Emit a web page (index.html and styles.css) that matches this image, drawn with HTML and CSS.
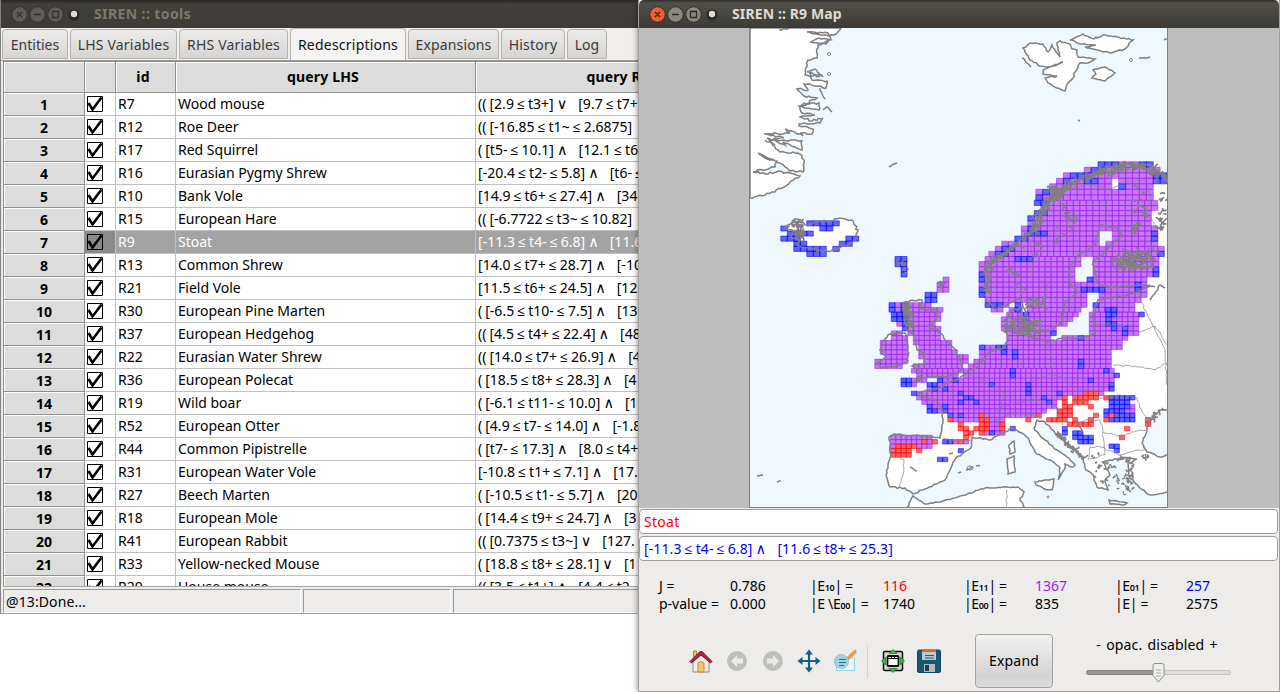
FILE: index.html
```html
<!DOCTYPE html>
<html lang="en">
<head>
<meta charset="utf-8">
<title>SIREN</title>
<link rel="stylesheet" href="styles.css">
</head>
<body>
<section class="window tools">
  <header class="titlebar inactive">
    <svg class="controls" width="76" height="28" viewBox="0 0 76 28"><g fill="#5e5c56" stroke="#34332f"><circle cx="12.500" cy="14.500" r="7.800"/><circle cx="30.500" cy="14.500" r="7.800"/><circle cx="48.500" cy="14.500" r="7.800"/></g><path d="M10 12l5 5m0-5l-5 5M27 14.500h7M45.500 11.500h6v6h-6z" fill="none" stroke="#33322e" stroke-width="1.300"/><circle cx="67" cy="15" r="5.500" fill="#292825"/><circle cx="67" cy="14" r="3.200" fill="#dedbd5"/></svg>
    <h1>SIREN :: tools</h1>
  </header>
  <nav class="tabs">
    <span class="tab t1">Entities</span><span class="tab t2">LHS Variables</span><span class="tab t3">RHS Variables</span><span class="tab t4 active">Redescriptions</span><span class="tab t5">Expansions</span><span class="tab t6">History</span><span class="tab t7">Log</span>
  </nav>
  <div class="table">
    <div class="row head"><span></span><span></span><span>id</span><span>query LHS</span><span>query RHS</span></div>
    <div class="body" id="rows"></div>
  </div>
  <footer class="status"><span class="s1">@13:Done...</span><span class="s2"></span><span class="s3"></span></footer>
</section>

<section class="window map">
  <header class="titlebar">
    <svg class="controls" width="76" height="28" viewBox="0 0 76 28"><g stroke="#2e2d29"><circle cx="12.500" cy="14.500" r="7.800" fill="#ea5f35"/><circle cx="30.500" cy="14.500" r="7.800" fill="#8a887f"/><circle cx="48.500" cy="14.500" r="7.800" fill="#8a887f"/></g><path d="M10 12l5 5m0-5l-5 5M27 14.500h7M45.500 11.500h6v6h-6z" fill="none" stroke="#33261f" stroke-width="1.300"/><circle cx="67" cy="15" r="5.500" fill="#292825"/><circle cx="67" cy="14" r="3.200" fill="#dedbd5"/></svg>
    <h1>SIREN :: R9 Map</h1>
  </header>
  <div class="canvas"><svg id="europe" width="419" height="480" viewBox="749 28 419 480"></svg></div>
  <div class="field red">Stoat</div>
  <div class="field blue"><span class="q">[-11.3 ≤ t4- ≤ 6.8] <i>∧</i>   [11.6 ≤ t8+ ≤ 25.3]</span></div>
  <div class="stats">
    <span>J =</span><span>0.786</span><span class="e">|E<b>10</b>| =</span><span class="red">116</span><span class="e">|E<b>11</b>| =</span><span class="purple">1367</span><span class="e">|E<b>01</b>| =</span><span class="blue">257</span>
    <span>p-value =</span><span>0.000</span><span class="e">|E \E<b>00</b>| =</span><span>1740</span><span class="e">|E<b>00</b>| =</span><span>835</span><span class="e">|E| =</span><span>2575</span>
  </div>
  <div class="toolbar">
    <svg class="icon" viewBox="0 0 24 24"><path d="M4.500 2h3v6h-3z" fill="#f4c266" stroke="#b5803c"/><path d="M4 12L12 4l8 8v11H4z" fill="#eee" stroke="#8b8b8b"/><path d="M9 23v-9q3-3 6 0v9z" fill="#f6c667" stroke="#d8871c"/><path d="M1 12.500L11 2.500h2l10 10-1.500 1.500L12 6l-9.500 8z" fill="#b3243d" stroke="#7c1227"/></svg>
    <svg class="icon" viewBox="0 0 24 24"><circle cx="12" cy="12" r="10" fill="#bdbfbc"/><path d="M6 12l6-6v3.500h6v5h-6V18z" fill="#ecebe9"/></svg>
    <svg class="icon" viewBox="0 0 24 24"><circle cx="12" cy="12" r="10" fill="#bdbfbc"/><path d="M18 12l-6-6v3.500H6v5h6V18z" fill="#ecebe9"/></svg>
    <svg class="icon" viewBox="0 0 24 24"><path d="M12 3v18M3 12h18" stroke="#12617f" stroke-width="2.200"/><path d="M12 .5l4 5H8zM12 23.500l4-5H8zM.500 12l5-4v8zM23.500 12l-5-4v8z" fill="#12617f"/></svg>
    <svg class="icon" viewBox="0 0 24 24"><path d="M3.500 9h18v12.500h-18z" fill="#e8f7f9" stroke="#8bdce9"/><path d="M13 9.500l7-7 3-1.500v3l-8 7z" fill="#f0a13e" stroke="#bc8752" stroke-width=".6"/><circle cx="8.500" cy="12.500" r="7" fill="#91cbd6" fill-opacity=".8" stroke="#a7bfc3"/><path d="M6 10.500h7m-7 3h7m-7 3h5" stroke="#147596"/></svg>
    <i class="separator"></i>
    <svg class="icon" viewBox="0 0 24 24"><rect x="2.500" y="2.500" width="19" height="19" rx="1.500" fill="#d2d5d1" stroke="#111" stroke-width="1.500"/><rect x="6.500" y="7" width="11" height="10" rx="1" fill="#fff" stroke="#111" stroke-width="1.800"/><path d="M7 9.500h10M10.500 7v3m3-3v3" stroke="#111"/><path d="M8 4.500l4-4 4 4zM8 19.500l4 4 4-4zM4.500 8v8l-4-4zM19.500 8v8l4-4z" fill="#37b943" stroke="#176822" stroke-width=".6"/></svg>
    <svg class="icon" viewBox="0 0 24 24"><rect x=".5" y="1" width="23" height="22.500" rx="1.500" fill="#185673" stroke="#10455f"/><path d="M5 1h14v10H5z" fill="#b5cbd5"/><path d="M5 1h14v2H5z" fill="#d56a20"/><path d="M8 6.500h9M8 9h9" stroke="#46545b"/><path d="M7 15h11v8H7z" fill="#aebdc2"/><path d="M8 16h4v6H8z" fill="#263c48"/></svg>
    <button class="expand">Expand</button>
    <div class="opacity"><span>- opac. disabled&nbsp;+</span><svg width="146" height="22" viewBox="0 0 146 22"><rect x=".5" y="7.500" width="144" height="4" rx="2" fill="#dedddb" stroke="#c5c3bf"/><rect x=".5" y="7.500" width="72" height="4" rx="2" fill="#989793" stroke="#82817e"/><path d="M69 .500h7q2 0 2 2v10l-5.500 6.500-5.500-6.500v-10q0-2 2-2z" fill="#efefed" stroke="#92908c"/><path d="M70 7h5m-5 3h5m-5 3h5" stroke="#aaa"/></svg></div>
  </div>
</section>
<script src="app.js"></script>
</body>
</html>
```
FILE: styles.css
```css
* { box-sizing: border-box; }
body { margin: 0; width: 1280px; height: 692px; overflow: hidden; position: relative; background: #fff; color: #000; font: 14px/20px "Noto Sans", "Open Sans", "DejaVu Sans", sans-serif; letter-spacing: 0; }
h1 { margin: 0; font-size: 14px; line-height: 28px; letter-spacing: .12px; }
.window { position: absolute; top: 0; background: #edeceb; display: flex; flex-direction: column; overflow: hidden; }
.tools { left: 0; width: 640px; height: 614px; border-left: 1px solid #85817c; border-bottom: 1px solid #a5a19d; }
.map { left: 638px; width: 642px; height: 692px; border: 1px solid #a19e9a; border-top: 0; box-shadow: 0 0 6px rgba(0,0,0,.5); }
.titlebar { height: 28px; flex: none; display: flex; align-items: center; gap: 11px; padding-left: 6px; background: linear-gradient(#2f2e2a 0, #514f49 3px, #3b3a35 100%); color: #dfdbd2; }
.map .titlebar { border-radius: 5px 5px 0 0; }
.tools .titlebar h1 { letter-spacing: .4px; }
.inactive { background: linear-gradient(#2a2926 0, #403f3a 4px, #3d3c37 100%); color: #7c786e; }
.controls { flex: none; }
.tabs { height: 33px; flex: none; display: flex; align-items: flex-end; gap: 2px; padding: 0 0 1px 1px; border-bottom: 1px solid #9d9a96; background: #f0efee; }
.tab { height: 30px; display: flex; align-items: center; justify-content: center; padding-top: 2px; color: #3a3a3a; border: 1px solid #b5b1ad; border-radius: 4px 4px 0 0; background: linear-gradient(#ecebea, #d7d5d3); white-space: nowrap; }
.tab.active { height: 32px; margin-bottom: -1px; padding-top: 1px; background: #f5f4f3; color: #111; border-bottom: 0; letter-spacing: .22px; }
.t1 { width: 66px; } .t2 { width: 107px; letter-spacing: .2px; } .t3 { width: 109px; letter-spacing: .2px; } .t4 { width: 116px; } .t5 { width: 91px; letter-spacing: .15px; } .t6 { width: 64px; letter-spacing: .2px; } .t7 { width: 40px; }
.table { height: 526px; margin-left: 2px; border-left: 1px solid #8b8b8b; border-top: 1px solid #8b8b8b; border-bottom: 1px solid #a9a6a2; overflow: hidden; background: #fff; }
.row { display: grid; grid-template-columns: 81px 31px 60px 300px 300px; height: 23px; white-space: pre; }
.row > span { border-right: 1px solid #c0c0c0; border-bottom: 1px solid #c0c0c0; padding-left: 2px; line-height: 22px; overflow: hidden; }
.row > span:first-child { background: #dcdcdc; color: #000; border-color: #909090; box-shadow: inset 1px 1px #fff; text-align: center; font-weight: bold; padding: 1px 0 0; }
.row.head { height: 31px; background: #dcdcdc; }
.row.head > span { border-color: #909090; box-shadow: inset 1px 1px #fff; font-weight: bold; text-align: center; line-height: 29px; padding: 0 5px 0 0; letter-spacing: .15px; }
.row.selected { background: #a3a3a3; color: #fff; }
.row.selected > span:nth-child(2) { background: #8a8a8a; }
.check { display: block; margin-top: 3px; }
.q { white-space: pre; word-spacing: -.7px; letter-spacing: .03px; }
.q i { font: 14.500px/1 "DejaVu Sans", sans-serif; margin-right: 2px; }
.status { display: grid; grid-template-columns: 298px 148px 190px; gap: 2px; height: 26px; padding: 2px 0 1px 2px; }
.status span { border: 1px solid #999; border-right-color: #fff; border-bottom-color: #fff; padding: 1px 3px 0 2px; line-height: 21px; letter-spacing: .1px; }
.canvas { height: 480px; flex: none; background: #bebebe; display: flex; padding-left: 110px; }
.field { flex: none; height: 25px; margin: 1px 1px 1px 0; border: 1px solid #a19d99; border-radius: 4px; background: #fff; padding: 0 4px; line-height: 24px; }
.field .q { letter-spacing: .1px; }
.field.red { letter-spacing: .3px; }
.red { color: #f00; } .blue { color: #00f; } .purple { color: #a020f0; }
.stats { display: grid; grid-template-columns: 71px 80px 73px 81px 71px 80px 71px 60px; grid-auto-rows: 18px; padding: 15px 0 0 20px; line-height: 18px; white-space: nowrap; height: 52px; }
.stats b { font-size: 9px; font-weight: 600; }
.stats .e { letter-spacing: -.35px; }
.toolbar { display: flex; align-items: center; gap: 12px; padding: 20px 0 0 50px; }
.icon { width: 24px; height: 24px; flex: none; }
.separator { width: 1px; height: 33px; background: #d5d3d0; margin: 0 1px 0 -2px; }
.expand { width: 78px; height: 54px; margin: 0 21px 0 22px; border: 1px solid #a5a29e; border-radius: 4px; background: linear-gradient(#f2f2f2, #d3d3d3 80%, #dcdcdc); font: inherit; letter-spacing: .2px; color: #000; padding: 0; }
.opacity { display: flex; flex-direction: column; align-items: center; gap: 8px; height: 52px; word-spacing: 1.500px; letter-spacing: .15px; }
.opacity span { line-height: 20px; margin-right: 4px; }
```
FILE: app.js
```js
const rows = [
  ['R7','Wood mouse','(( [2.9 ≤ t3+] ∨   [9.7 ≤ t7+'],
  ['R12','Roe Deer','(( [-16.85 ≤ t1~ ≤ 2.6875]'],
  ['R17','Red Squirrel','( [t5- ≤ 10.1] ∧   [12.1 ≤ t6'],
  ['R16','Eurasian Pygmy Shrew','[-20.4 ≤ t2- ≤ 5.8] ∧   [t6- ≤'],
  ['R10','Bank Vole','[14.9 ≤ t6+ ≤ 27.4] ∧   [34'],
  ['R15','European Hare','(( [-6.7722 ≤ t3~ ≤ 10.82]'],
  ['R9','Stoat','[-11.3 ≤ t4- ≤ 6.8] ∧   [11.6'],
  ['R13','Common Shrew','[14.0 ≤ t7+ ≤ 28.7] ∧   [-10'],
  ['R21','Field Vole','[11.5 ≤ t6+ ≤ 24.5] ∧   [12'],
  ['R30','European Pine Marten','( [-6.5 ≤ t10- ≤ 7.5] ∧   [13'],
  ['R37','European Hedgehog','(( [4.5 ≤ t4+ ≤ 22.4] ∧   [48'],
  ['R22','Eurasian Water Shrew','(( [14.0 ≤ t7+ ≤ 26.9] ∧   [4'],
  ['R36','European Polecat','( [18.5 ≤ t8+ ≤ 28.3] ∧   [4'],
  ['R19','Wild boar','( [-6.1 ≤ t11- ≤ 10.0] ∧   [1'],
  ['R52','European Otter','( [4.9 ≤ t7- ≤ 14.0] ∧   [-1.8'],
  ['R44','Common Pipistrelle','( [t7- ≤ 17.3] ∧   [8.0 ≤ t4+'],
  ['R31','European Water Vole','[-10.8 ≤ t1+ ≤ 7.1] ∧   [17.'],
  ['R27','Beech Marten','( [-10.5 ≤ t1- ≤ 5.7] ∧   [20'],
  ['R18','European Mole','( [14.4 ≤ t9+ ≤ 24.7] ∧   [3'],
  ['R41','European Rabbit','(( [0.7375 ≤ t3~] ∨   [127.'],
  ['R33','Yellow-necked Mouse','( [18.8 ≤ t8+ ≤ 28.1] ∨   [1'],
  ['R20','House mouse','(( [3.5 ≤ t1+] ∧   [4.4 ≤ t2']
];
const check = '<svg class="check" width="17" height="17" viewBox="0 0 17 17"><path d="M.5.5h15v15H.5z" fill="none" stroke="#000"/><path d="M1.500 7l4 6.500L14.500 1.500" fill="none" stroke="#000" stroke-width="2.600"/></svg>';
document.getElementById('rows').innerHTML = rows.map((r, i) =>
  `<div class="row${i === 6 ? ' selected' : ''}"><span>${i + 1}</span><span>${check}</span><span>${r[0]}</span><span>${r[1]}</span><span class="q">${r[2].replace(/[∧∨]/g, '<i>$&</i>')}</span></div>`).join('');

/* Map */
let seed = 7;
const rnd = () => (seed = (seed * 16807) % 2147483647) / 2147483647;
const pts = s => s.trim().split(/\s+/).map(p => p.split(',').map(Number));
function rough(p, amp, closed = true) {
  const out = [];
  const n = closed ? p.length : p.length - 1;
  for (let i = 0; i < n; i++) {
    const a = p[i], b = p[(i + 1) % p.length];
    const edge = (a[0] <= 750 && b[0] <= 750) || (a[0] >= 1168 && b[0] >= 1168) || (a[1] <= 28 && b[1] <= 28) || (a[1] >= 508 && b[1] >= 508);
    const k = edge ? 1 : Math.max(1, Math.round(Math.hypot(a[0] - b[0], a[1] - b[1]) / 2.5));
    for (let j = 0; j < k; j++) {
      const t = j / k, d = j ? amp : 0;
      out.push([a[0] + (b[0] - a[0]) * t + (rnd() - .5) * d, a[1] + (b[1] - a[1]) * t + (rnd() - .5) * d]);
    }
  }
  if (!closed) out.push(p[p.length - 1]);
  return out;
}
const path = (p, closed = true) => 'M' + p.map(q => q[0].toFixed(1) + ' ' + q[1].toFixed(1)).join('L') + (closed ? 'z' : '');
const inside = (x, y, p) => {
  let c = false;
  for (let i = 0, j = p.length - 1; i < p.length; j = i++)
    if ((p[i][1] > y) !== (p[j][1] > y) && x < (p[j][0] - p[i][0]) * (y - p[i][1]) / (p[j][1] - p[i][1]) + p[i][0]) c = !c;
  return c;
};

const land = [
  ['750,28 841,28 836,34 828,36 807,32 828,33 831,39 826,44 811,42 819,38 830,40 818,45 817,58 808,60 805,75 820,76 809,72 812,80 827,81 826,88 804,84 808,90 797,89 804,96 817,98 800,106 819,103 819,110 799,106 802,113 815,115 800,117 812,121 823,118 820,123 799,124 799,126 813,129 812,134 801,133 803,136 785,129 790,133 764,134 784,138 770,140 783,140 802,141 802,150 783,142 785,145 767,138 780,152 798,153 804,160 803,172 790,171 785,167 780,163 758,153 765,158 777,161 775,167 753,172 765,174 779,171 800,176 775,192 750,198', 2],
  ['1023,48 1030,43 1043,44 1048,52 1052,45 1060,57 1057,43 1060,41 1070,44 1072,49 1077,50 1078,57 1095,59 1088,63 1080,63 1075,72 1073,78 1068,83 1065,91 1057,88 1048,83 1045,78 1057,76 1043,74 1043,70 1063,62 1050,67 1040,66 1030,60', 1.5],
  ['1071,40 1083,34 1094,39 1103,35 1117,37 1133,40 1125,49 1110,53 1098,50 1085,47 1096,45 1077,43', 1.5],
  ['1093,70 1105,67 1115,73 1105,81 1092,78 1096,74', 1.5],
  ['889,437 894,434 920,436 940,438 943,420 942,408 935,400 920,396 918,393 930,390 940,388 948,382 957,380 967,372 980,365 990,352 1005,347 1008,338 1005,325 1010,312 1022,306 1020,325 1025,335 1048,342 1062,338 1085,338 1095,333 1093,315 1098,300 1115,297 1140,292 1150,285 1110,287 1097,283 1093,262 1107,250 1122,235 1118,228 1100,225 1095,245 1078,255 1069,270 1070,283 1078,292 1065,302 1062,322 1050,330 1035,330 1028,318 1020,298 1010,303 995,309 986,300 985,265 1010,250 1030,232 1042,210 1060,190 1080,178 1105,168 1125,164 1150,165 1168,180 1168,410 1160,410 1150,420 1147,430 1142,443 1147,452 1160,457 1168,455 1168,492 1150,495 1140,488 1130,478 1128,463 1137,459 1125,458 1110,460 1103,462 1110,475 1105,480 1108,490 1097,487 1093,475 1086,470 1083,457 1070,445 1055,433 1045,422 1037,420 1034,428 1045,440 1057,450 1067,457 1075,465 1073,467 1065,464 1064,470 1060,477 1058,480 1060,468 1050,460 1035,452 1028,438 1022,433 1012,428 1000,434 990,440 972,437 971,448 956,458 950,470 945,480 925,489 913,494 905,488 890,487 886,475 891,455', 1.6],
  ['907,508 913,496 925,504 940,502 955,498 985,488 1018,487 1024,492 1020,500 1025,508', 1.2],
  ['1035,482 1054,479 1052,490 1048,490 1036,485', 1], ['1007,459 1014,456 1015,472 1008,474', 1], ['1009,445 1014,441 1015,452 1010,454', 1],
  ['1109,500 1127,503 1124,505 1110,504', 1],
  ['903,303 912,300 922,300 920,309 938,309 936,320 929,327 938,330 945,340 953,347 960,358 962,365 958,374 940,377 928,376 914,383 922,374 912,366 923,364 924,353 917,350 915,335 906,329 904,315', 2],
  ['890,334 905,333 908,347 908,361 896,367 881,368 878,362 886,357 880,350 882,342', 2],
  ['784,229 795,219 802,222 808,226 815,221 830,221 840,218 852,220 858,230 855,240 845,246 835,250 823,252 806,248 798,246 800,240 790,236 800,232', 2.5]
];
const region = pts('1101,162 1152,162 1153,167 1163,167 1165,185 1150,186 1150,198 1157,199 1157,212 1149,213 1154,215 1155,232 1160,234 1160,247 1167,249 1167,256 1161,257 1160,274 1152,277 1145,283 1145,297 1138,300 1138,312 1144,313 1144,318 1138,319 1138,332 1127,340 1117,350 1113,352 1113,372 1118,373 1118,378 1113,379 1111,391 1100,395 1065,397 1060,400 1055,409 1045,412 1040,417 1020,418 1003,416 1003,435 982,436 978,414 942,413 935,413 927,408 915,398 910,392 928,390 928,383 940,380 960,378 963,370 975,360 983,347 997,343 1005,343 1006,333 1000,332 1000,318 1007,312 1017,305 1014,302 1003,310 993,311 988,306 982,298 979,270 985,258 992,253 1003,245 1018,235 1025,225 1037,210 1043,202 1036,200 1036,193 1052,183 1062,178 1073,172 1093,167');
const islands = ['923,300 932,300 932,308 942,309 941,320 932,327 940,327 942,337 950,342 952,348 957,355 966,355 966,365 960,376 927,379 918,385 910,385 910,377 922,373 910,370 910,367 922,363 920,350 913,345 912,337 905,330 895,323 894,310 900,300',
  '889,330 903,330 910,343 910,363 900,369 879,369 874,365 874,359 885,357 878,353 878,338 889,338', '936,288 944,277 950,277 950,290 943,292 935,292',
  '889,434 934,434 934,446 913,447 910,456 889,457', '943,438 969,438 969,446 943,445', '947,414 980,414 980,424 957,423', '1118,410 1134,405 1134,420 1120,422'].map(pts);
const holes = ['1100,233 1112,233 1112,240 1106,244 1100,244', '1082,257 1092,257 1092,275 1083,281 1072,281 1073,268 1082,266', '1083,295 1098,294 1098,299 1092,304 1092,333 1057,339 1050,338 1051,330 1067,323 1073,318 1082,312 1087,305', '1112,170 1116,180 1116,188 1109,188', '1023,303 1028,309 1024,314', '989,277 993,289 989,290', '943,421 959,421 957,436 943,436'].map(pts);
const blue = [
  [896,259,909,266],[901,266,909,275],[924,291,936,301],[889,304,895,310],[902,379,909,386],[910,392,916,397],[894,310,909,323],[900,300,909,310],[905,323,910,329],
  [782,225,788,231],[782,235,800,241],[788,230,811,236],[795,241,809,252],[808,219,841,225],[821,225,834,231],[795,246,829,252],[810,252,829,256],[830,245,842,251],[842,241,850,247],[849,235,856,241],
  [1101,162,1110,168],[1114,162,1121,168],[1142,162,1151,169],[1156,174,1165,185],[1073,172,1092,178],[1084,178,1101,184],[1093,167,1101,173],[1062,178,1068,184],[1043,188,1052,194],[1036,193,1044,207],[1036,210,1047,217],[1030,214,1035,221],[1025,225,1032,232],[1031,229,1044,237],[1018,235,1025,242],[1004,245,1012,251],[998,249,1007,255],[1018,255,1030,260],[980,270,987,280],[981,288,986,295],[988,302,1000,308],
  [1117,185,1123,190],[1153,233,1160,240],[1160,249,1167,255],[1155,269,1161,275],[1133,284,1140,292],[1081,287,1103,293],[1086,277,1092,282],[1104,306,1114,315],[1099,329,1114,332],[1104,318,1110,324],[1109,323,1116,329],[1138,313,1144,319],[1122,328,1128,334],[1092,300,1098,307],[1075,300,1082,305],[1017,304,1023,310],[1023,312,1030,322],[1050,331,1058,337],[1077,334,1082,340],
  [982,347,986,352],[996,343,1005,349],[1000,348,1006,356],[1012,352,1016,357],[1012,370,1016,380],[1007,376,1012,380],[1077,357,1082,362],[1077,366,1082,370],[1113,372,1119,378],[1107,381,1112,390],[1103,370,1107,374],[1025,381,1031,394],[1043,396,1047,402],[1048,400,1052,405],[1057,392,1061,396],[1071,388,1075,394],[1088,377,1092,382],
  [929,383,936,388],[934,388,938,392],[940,380,944,384],[952,379,958,384],[945,388,949,392],[957,393,961,397],[958,402,962,406],[958,412,962,417],[943,406,947,414],[948,411,952,416],[963,396,967,400],[970,395,975,400],[975,401,979,405],[925,406,930,411],[930,409,935,413],[989,382,994,388],
  [939,455,947,461],[942,439,953,445],[958,448,965,451],[930,438,938,442],[1011,427,1017,431],[990,431,996,435],
  [1110,395,1135,400],[1108,400,1131,409],[1106,409,1125,423],[1125,415,1133,420],[1064,427,1070,435],[1072,431,1083,438],[1076,438,1085,445],[1085,437,1092,442],[1100,442,1105,446],[1109,442,1117,449],[1112,449,1117,453]
];
const red = [
  [889,437,893,444],[897,442,911,447],[914,433,917,437],[921,433,930,437],[889,449,909,457],[902,442,913,455],[924,440,927,444],[918,448,922,454],[930,441,935,445],[911,443,919,448],
  [958,424,966,431],[963,428,970,440],[970,431,975,435],[975,427,988,431],[979,412,984,435],[984,417,988,430],[998,420,1003,431],[948,419,953,424],[957,439,962,443],[967,439,970,443],[1024,417,1029,423],
  [1061,397,1066,401],[1064,401,1070,410],[1072,397,1080,405],[1070,405,1075,418],[1083,393,1100,399],[1078,397,1087,405],[1090,405,1095,409],[1075,411,1083,415],[1092,413,1100,417],[1055,414,1068,421],[1045,419,1057,423],[1058,410,1065,414],[1068,423,1082,428],[1083,424,1092,427],[1075,419,1079,423],[1106,395,1110,400],[1102,400,1105,404],[1111,413,1115,418],[1106,416,1110,420],[1125,426,1132,431],[1138,426,1142,431],[1146,418,1150,428],[1120,434,1125,438],[1089,417,1093,421],[1038,412,1042,416]
];
const hit = (x, y, list) => list.some(r => x >= r[0] && x <= r[2] && y >= r[1] && y <= r[3]);
const cells = { '#a020f0': '', '#0000ff': '', '#ff0000': '' };
for (let y = 164.500; y < 463; ) {
  const h = y < 200 ? 5.500 : y < 300 ? 5.100 : y < 380 ? 4.700 : 4.400;
  const w = y < 200 ? 6.900 : y < 255 ? 6.500 : y < 310 ? 6 : y < 370 ? 5.500 : 5.200;
  for (let x = 784; x < 1167; x += w) {
    let c = null;
    if (hit(x, y, red)) c = '#ff0000';
    else if (hit(x, y, blue)) c = '#0000ff';
    else if (!holes.some(p => inside(x, y, p)) && (inside(x, y, region) || islands.some(p => inside(x, y, p)))) c = '#a020f0';
    if (c) cells[c] += `M${(x - w / 2).toFixed(1)} ${(y - h / 2).toFixed(1)}h${w}v${h}h-${w}z`;
  }
  y += h;
}
const line = (s, w = 1, a = 1.500) => `<path d="${path(rough(pts(s), a, false), false)}" fill="none" stroke="#808080" stroke-width="${w}"/>`;
function scribble(s, n, spread, len, w = 1.500) {
  const p = pts(s); let d = '';
  for (let i = 0; i < n; i++) {
    const t = rnd() * (p.length - 1), k = Math.floor(t), f = t - k;
    const x = p[k][0] + ((p[k + 1] || p[k])[0] - p[k][0]) * f + (rnd() - .5) * spread;
    const y = p[k][1] + ((p[k + 1] || p[k])[1] - p[k][1]) * f + (rnd() - .5) * spread;
    d += `M${x.toFixed(1)} ${y.toFixed(1)}`;
    for (let j = 0; j < 3; j++) d += `l${((rnd() - .5) * len).toFixed(1)} ${((rnd() - .5) * len).toFixed(1)}`;
  }
  return `<path d="${d}" fill="none" stroke="#808080" stroke-width="${w}" stroke-linejoin="round"/>`;
}
const outlines = land.map(([s, a]) => path(rough(pts(s), a)));
let svg = '<rect x="749" y="28" width="419" height="480" fill="#f0f8ff"/>';
svg += outlines.map(d => `<path d="${d}" fill="#fff"/>`).join('');
for (const [c, d] of Object.entries(cells)) svg += `<path d="${d}" fill="${c}" fill-opacity=".6" stroke="${c}" stroke-opacity=".55" stroke-width="1"/>`;
svg += outlines.map(d => `<path d="${d}" fill="none" stroke="#808080" stroke-width="1.500"/>`).join('');
svg += scribble('987,292 986,270 1005,253 1030,234 1043,210 1055,194 1075,181 1105,171 1125,167 1150,168 1166,180', 270, 5, 5);
svg += scribble('1052,190 1060,195', 35, 9, 6);
svg += scribble('1118,262 1150,260', 120, 18, 5);
svg += scribble('1010,325 1035,328', 85, 16, 5);
svg += scribble('906,306 913,328', 40, 6, 5) + scribble('1097,462 1122,488', 35, 20, 3) + scribble('1130,463 1130,488', 26, 8, 4) + scribble('1055,433 1083,458', 40, 3, 4) + scribble('1150,420 1163,409', 15, 4, 4) + scribble('1107,461 1150,457', 14, 4, 4);
svg += scribble('790,226 800,222 800,240', 40, 6, 5) + scribble('900,262 906,272', 12, 4, 3) + scribble('941,282 943,288', 14, 4, 3);
svg += scribble('1065,200 1075,220 1050,240 1035,260', 20, 12, 7);
svg += scribble('1132,190 1142,210 1134,240', 18, 12, 7) + scribble('1165,191 1160,220 1164,232', 18, 5, 6);
svg += scribble('1015,270 1028,300 1040,305', 24, 10, 6);
['1045,300 1048,286 1032,275 1033,258 1030,245 1040,225 1052,205 1067,190 1090,184 1110,190 1118,186 1130,181 1145,180','1110,218 1106,205 1109,193','1147,183 1151,200 1146,212 1158,228','1138,292 1145,310 1155,330 1165,350 1167,385','1093,324 1122,326 1140,332 1155,326 1167,345','1113,365 1140,367 1155,370 1168,362','1046,342 1052,358 1050,370','1032,382 1050,374 1062,378 1078,390 1100,390 1113,382','968,374 985,383 1000,388 1005,395 1000,408 992,418','1000,408 1020,402 1038,400 1058,408 1063,425','1000,430 996,420 1012,413 1032,415 1042,419','1060,410 1080,400 1105,398 1120,395 1137,398 1142,412 1150,420','943,438 955,441 971,440','895,455 904,460 903,475 899,487','1103,432 1120,436 1140,430 1147,430','1066,427 1085,420 1100,420 1103,432 1104,448 1120,455 1138,450 1147,450','1088,460 1090,447 1104,447 1105,455 1090,459','1006,508 1007,490'].forEach(s => svg += line(s, .7));
['779,30 790,28', '889,167 894,164 897,163', '1022,58 1027,63 1031,67', '1078,120 1080,121', '1139,58 1150,57', '1164,40 1168,39', '807,72 815,69 823,77', '820,88 825,99', '823,110 827,107 832,112', '757,476 763,475', '777,482 781,481', '765,140 775,145', '966,470 973,467', '976,466 980,466', '958,473 961,472', '910,467 917,471', '949,454 953,453', '1077,422 1082,432', '1150,300 1160,285 1165,288', '1146,286 1155,287'].forEach(s => svg += line(s, 1.500));
svg += '<g fill="none" stroke="#808080"><circle cx="829" cy="54" r="1.500"/><circle cx="829" cy="74" r="1.500"/><circle cx="1131" cy="60" r="1.500"/><circle cx="1048" cy="497" r="1"/><ellipse cx="970" cy="468" rx="3" ry="2"/><path d="M749.500 28v480M1167.500 28v480M749 507.500h419"/></g>';
document.getElementById('europe').innerHTML = svg;
```
